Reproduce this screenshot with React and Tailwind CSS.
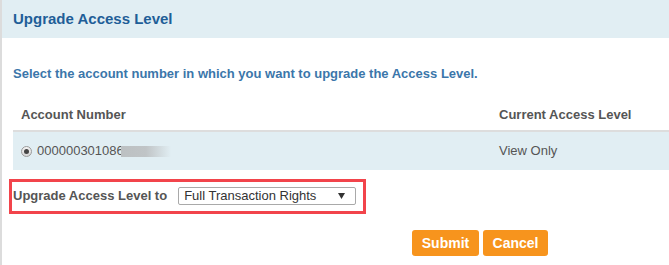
export default function App() {
  return (
    <div
      className="w-[669px] h-[265px] overflow-hidden bg-white border-l-2 border-[#dcdcdc] text-[13px] text-[#555]"
      style={{ fontFamily: '"Liberation Sans", Arial, sans-serif' }}
    >
      {/* Panel title */}
      <div className="h-[38px] bg-[#e1eef3] flex items-center pl-[11px]">
        <h2 className="text-[15px] font-bold text-[#1f5e98]">Upgrade Access Level</h2>
      </div>

      <div className="pl-[11px]">
        <p className="mt-[28px] leading-[15px] font-bold text-[#3b76aa]">
          Select the account number in which you want to upgrade the Access Level.
        </p>

        {/* Accounts table */}
        <div className="mt-[18px] w-[700px]">
          <div className="grid grid-cols-[478px_1fr] h-[31px] items-center font-bold">
            <div className="px-2">Account Number</div>
            <div className="px-2">Current Access Level</div>
          </div>
          <div className="grid grid-cols-[478px_1fr] h-[40px] items-center border-t-2 border-[#dddddd] bg-[#e1eef3]">
            <label className="flex items-center pl-2">
              <span className="w-[11px] h-[11px] rounded-full border border-[#9a9a9a] bg-gradient-to-b from-[#f4f4f4] to-[#d6d6d6] flex items-center justify-center">
                <span className="w-[5px] h-[5px] rounded-full bg-[#444]" />
              </span>
              <span className="ml-[5px]">000000301086</span>
              <span className="-ml-[3px] w-[50px] h-[11px] bg-gradient-to-r from-[#bcc0c2] via-[#c0c4c6] to-[#e1eef3]" />
            </label>
            <div className="px-2">View Only</div>
          </div>
        </div>

        {/* Upgrade selection (highlighted) */}
        <div className="mt-[9px] -ml-[4px] w-[357px] h-[35px] border-[3px] border-[#f2444b] flex items-center pl-[1px] pb-[2px]">
          <span className="font-bold">Upgrade Access Level to</span>
          <div className="ml-[11px] w-[178px] h-[18px] border border-[#a9a9a9] rounded-[2px] bg-white flex items-center justify-between pl-[5px] pr-[10px] text-[#333]">
            <span>Full Transaction Rights</span>
            <svg width="7" height="6" viewBox="0 0 7 6">
              <path d="M0 0 H7 L3.5 6 Z" fill="#333" />
            </svg>
          </div>
        </div>

        <div className="mt-[16px] flex gap-[4px] pl-[399px]">
          <button className="h-[26px] w-[67px] rounded-[3px] bg-[#f7941d] text-white font-bold text-[14px]">
            Submit
          </button>
          <button className="h-[26px] w-[65px] rounded-[3px] bg-[#f7941d] text-white font-bold text-[14px]">
            Cancel
          </button>
        </div>
      </div>
    </div>
  )
}
